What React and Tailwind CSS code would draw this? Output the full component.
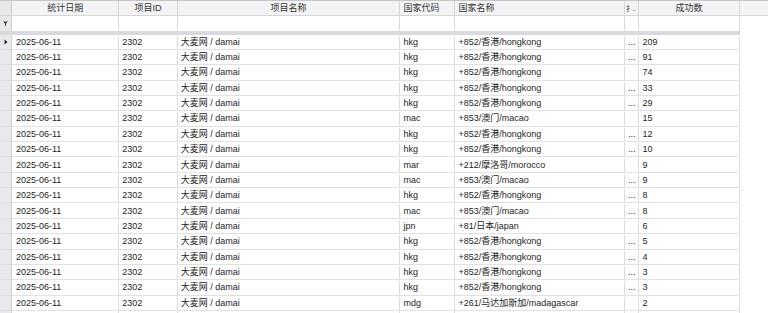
import React from "react";

const COLS = [
  { key: "date", title: "统计日期", w: "w-[107.3px]", hAlign: "justify-center" },
  { key: "pid", title: "项目ID", w: "w-[58.4px]", hAlign: "justify-center" },
  { key: "pname", title: "项目名称", w: "w-[222.8px]", hAlign: "justify-center" },
  { key: "code", title: "国家代码", w: "w-[55px]", hAlign: "justify-start" },
  { key: "cname", title: "国家名称", w: "w-[169.6px]", hAlign: "justify-start" },
  { key: "x", title: null, w: "w-[14.3px]", hAlign: "justify-start" },
  { key: "n", title: "成功数", w: "w-[100.3px]", hAlign: "justify-center" },
];

const C = {
  hkg: "+852/香港/hongkong",
  mac: "+853/澳门/macao",
  mar: "+212/摩洛哥/morocco",
  jpn: "+81/日本/japan",
  mdg: "+261/马达加斯加/madagascar",
};

const DATA = [
  ["hkg", 209, true],
  ["hkg", 91, true],
  ["hkg", 74, false],
  ["hkg", 33, true],
  ["hkg", 29, true],
  ["mac", 15, false],
  ["hkg", 12, true],
  ["hkg", 10, true],
  ["mar", 9, false],
  ["mac", 9, true],
  ["hkg", 8, true],
  ["mac", 8, true],
  ["jpn", 6, false],
  ["hkg", 5, true],
  ["hkg", 4, true],
  ["hkg", 3, true],
  ["hkg", 3, true],
  ["mdg", 2, false],
];

function Cell({ w, children, className = "" }) {
  return (
    <div
      className={`${w} shrink-0 h-full flex items-center px-[3px] border-r border-[#dcdcdc] overflow-hidden whitespace-nowrap ${className}`}
    >
      {children}
    </div>
  );
}

export default function App() {
  return (
    <div className="w-[768px] h-[313px] overflow-hidden bg-white text-[9px] text-[#262626] font-['Liberation_Sans','Noto_Sans_CJK_SC',sans-serif] leading-none">
      {/* header */}
      <div className="flex h-[16px] border-t border-[#c6c6c6] border-b border-b-[#d6d6d6] bg-[#f4f4f6]">
        <div className="w-[12px] shrink-0 h-full bg-[#e9e9ed] border-r border-[#d0d0d4]" />
        {COLS.map((c) =>
          c.title ? (
            <div
              key={c.key}
              className={`${c.w} shrink-0 h-full flex items-center ${c.hAlign} px-[3px] border-r border-[#d6d6da] overflow-hidden whitespace-nowrap text-[#333]`}
            >
              {c.title}
            </div>
          ) : (
            <div
              key={c.key}
              className={`${c.w} shrink-0 h-full flex items-center pl-[1px] border-r border-[#d6d6da] overflow-hidden whitespace-nowrap text-[#333] text-[7px] tracking-[-0.5px]`}
            >
              扌..
            </div>
          )
        )}
        <div className="flex-1 h-full" />
      </div>

      {/* filter row */}
      <div className="flex h-[15px]">
        <div className="w-[12px] shrink-0 h-full bg-[#e9e9ed] border-r border-[#d0d0d4] flex items-center justify-center">
          <svg width="5" height="5" viewBox="0 0 5 5">
            <path d="M0 0.5 H5 L3 2.8 V4.8 H2 V2.8 Z" fill="#444" />
          </svg>
        </div>
        {COLS.map((c) => (
          <Cell key={c.key} w={c.w} />
        ))}
        <div className="flex-1" />
      </div>

      {/* separator */}
      <div className="flex h-[3.5px]">
        <div className="w-[739.7px] h-full bg-[#d9d9df]" />
        <div className="flex-1" />
      </div>

      {/* data rows */}
      {DATA.map(([code, n, dots], i) => (
        <div key={i} className="flex h-[15.36px]">
          <div className="w-[12px] shrink-0 h-full bg-[#e9e9ed] border-r border-[#d0d0d4] border-b border-b-[#dedee2] flex items-center justify-center">
            {i === 0 && (
              <svg width="4" height="6" viewBox="0 0 4 6">
                <path d="M0.5 0.5 L3.5 3 L0.5 5.5 Z" fill="#222" />
              </svg>
            )}
          </div>
          <div className="flex h-full border-b border-[#e2e2e2] pt-[1px]">
            <Cell w="w-[107.3px]" className="pl-[4px]">2025-06-11</Cell>
            <Cell w="w-[58.4px]">2302</Cell>
            <Cell w="w-[222.8px]">大麦网 / damai</Cell>
            <Cell w="w-[55px]">{code}</Cell>
            <Cell w="w-[169.6px]">{C[code]}</Cell>
            <Cell w="w-[14.3px]" className="px-[1px]">{dots ? "..." : ""}</Cell>
            <Cell w="w-[100.3px]">{n}</Cell>
          </div>
          <div className="flex-1" />
        </div>
      ))}
      {/* partially visible next row */}
      <div className="flex h-[15.36px]">
        <div className="w-[12px] shrink-0 h-full bg-[#e9e9ed] border-r border-[#d0d0d4]" />
        <div className="flex h-full">
          {COLS.map((c) => (
            <Cell key={c.key} w={c.w} />
          ))}
        </div>
        <div className="flex-1" />
      </div>
    </div>
  );
}
